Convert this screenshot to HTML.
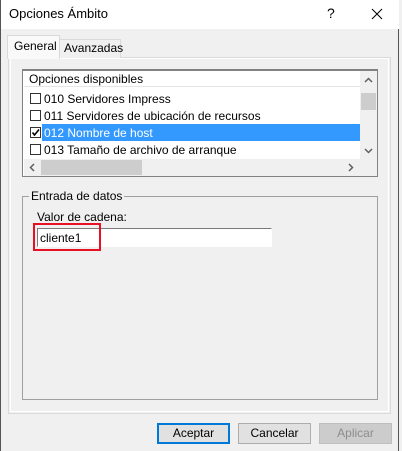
<!DOCTYPE html>
<html><head><style>
*{margin:0;padding:0;box-sizing:border-box}
body{width:402px;height:451px;background:#f0f0f0;font-family:"Liberation Sans",sans-serif;font-size:12px;color:#000;position:relative;overflow:hidden}
.a{position:absolute}
.t{white-space:nowrap}
.cb{position:absolute;width:11px;height:11px;border:1px solid #333;background:#fff}
.btn{position:absolute;top:423px;height:21px;width:73px;border:1px solid #adadad;background:#e1e1e1;text-align:center;line-height:19px}
</style></head><body>
<div class="a" style="left:0;top:0;width:399px;height:451px;border-left:1px solid #555;border-right:1px solid #555"></div>
<div class="a" style="left:1px;top:0;width:398px;height:29px;background:#fff"></div>
<div class="a t" style="left:9px;top:6px;font-size:13px">Opciones Ámbito</div>
<div class="a t" style="left:327px;top:5px;font-size:14px">?</div>
<svg class="a" style="left:371px;top:8px" width="12" height="12"><path d="M1 1L11 11M11 1L1 11" stroke="#000" stroke-width="1"/></svg>
<!-- panel -->
<div class="a" style="left:8px;top:57px;width:383px;height:357px;border:1px solid #dadada;background:#f0f0f0"></div>
<div class="a" style="left:10px;top:58px;width:379px;height:354px;border:1px solid #fff"></div>
<!-- tabs -->
<div class="a" style="left:59px;top:39px;width:62px;height:19px;border:1px solid #dadada;border-bottom:none;background:#f0f0f0"></div>
<div class="a t" style="left:64px;top:41px">Avanzadas</div>
<div class="a" style="left:7px;top:35px;width:53px;height:24px;border:1px solid #dadada;border-bottom:none;background:#f9f9f9"></div>
<div class="a t" style="left:14px;top:39px">General</div>
<!-- list -->
<div class="a" style="left:22px;top:69px;width:356px;height:108px;border:1px solid #828282;border-top:2px solid #828282;background:#fff"></div>
<div class="a" style="left:24px;top:71px;width:336px;height:16px;background:#fff;border-bottom:1px solid #e5e5e5"></div>
<div class="a t" style="left:29px;top:72px">Opciones disponibles</div>
<div class="a" style="left:360px;top:71px;width:17px;height:88px;background:#f0f0f0"></div>
<div class="a" style="left:361px;top:93px;width:15px;height:17px;background:#cdcdcd"></div>
<svg class="a" style="left:364px;top:77px" width="9" height="6"><path d="M1 5L4.5 1.5L8 5" stroke="#606060" stroke-width="1.5" fill="none"/></svg>
<svg class="a" style="left:364px;top:148px" width="9" height="6"><path d="M1 1L4.5 4.5L8 1" stroke="#606060" stroke-width="1.5" fill="none"/></svg>
<div class="a" style="left:24px;top:159px;width:353px;height:17px;background:#f0f0f0"></div>
<div class="a" style="left:41px;top:160px;width:101px;height:15px;background:#cdcdcd"></div>
<svg class="a" style="left:29px;top:163px" width="6" height="9"><path d="M5 1L1.5 4.5L5 8" stroke="#606060" stroke-width="1.5" fill="none"/></svg>
<svg class="a" style="left:348px;top:163px" width="6" height="9"><path d="M1 1L4.5 4.5L1 8" stroke="#606060" stroke-width="1.5" fill="none"/></svg>
<div class="a" style="left:42px;top:124px;width:318px;height:17px;background:#3399ff"></div>
<div class="cb" style="left:30px;top:93px"></div>
<div class="cb" style="left:30px;top:110px"></div>
<div class="cb" style="left:30px;top:127px"></div>
<svg class="a" style="left:31px;top:128px" width="9" height="9"><path d="M1.5 4.5L3.5 7L8 1.5" stroke="#000" stroke-width="1.6" fill="none"/></svg>
<div class="cb" style="left:30px;top:144px"></div>
<div class="a t" style="left:44px;top:92px;color:#000">010 Servidores Impress</div>
<div class="a t" style="left:44px;top:109px">011 Servidores de ubicación de recursos</div>
<div class="a t" style="left:44px;top:126px;color:#fff">012 Nombre de host</div>
<div class="a t" style="left:44px;top:143px">013 Tamaño de archivo de arranque</div>
<!-- group -->
<div class="a" style="left:22px;top:196px;width:356px;height:204px;border:1px solid #a0a0a0"></div>
<div class="a t" style="left:29px;top:189px;background:#f0f0f0;padding:0 2px">Entrada de datos</div>
<div class="a t" style="left:37px;top:210px">Valor de cadena:</div>
<div class="a" style="left:37px;top:228px;width:235px;height:19px;border:1px solid #7a7a7a;border-right-color:#fff;border-bottom-color:#fff;background:#fff"></div>
<div class="a t" style="left:40px;top:231px">cliente1</div>
<div class="a" style="left:33px;top:223px;width:68px;height:28px;border:2px solid #e81123"></div>
<!-- buttons -->
<div class="btn" style="left:157px;border:2px solid #0078d7;line-height:17px">Aceptar</div>
<div class="btn" style="left:238px">Cancelar</div>
<div class="btn" style="left:319px;background:#cccccc;border-color:#bfbfbf;color:#8d8d8d">Aplicar</div>
</body></html>
